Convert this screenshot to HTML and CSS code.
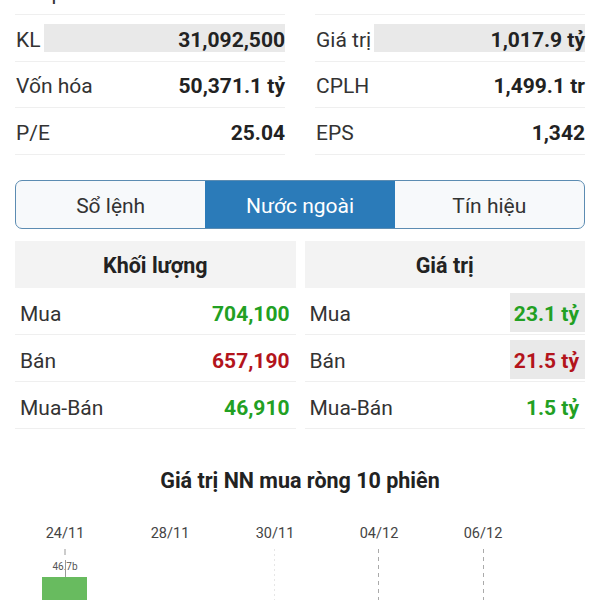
FILE: index.html
```html
<!DOCTYPE html>
<html lang="vi">
<head>
  <meta charset="UTF-8" />
  <meta name="viewport" content="width=device-width, initial-scale=1.0" />
  <title>Nước ngoài</title>
  <link rel="stylesheet" href="styles.css">
</head>
<body>

<div class="screen">

  <section class="stats">
    <div class="stat-row"><span class="label">Thấp nhất</span><span class="value down">32.65</span></div>
    <div class="stat-row"><span class="label">Cao nhất</span><span class="value up">33.75</span></div>

    <div class="stat-row"><span class="label">KL</span><span class="value flash">31,092,500</span></div>
    <div class="stat-row"><span class="label">Giá trị</span><span class="value flash">1,017.9 tỷ</span></div>

    <div class="stat-row"><span class="label">Vốn hóa</span><span class="value">50,371.1 tỷ</span></div>
    <div class="stat-row"><span class="label">CPLH</span><span class="value">1,499.1 tr</span></div>

    <div class="stat-row"><span class="label">P/E</span><span class="value">25.04</span></div>
    <div class="stat-row"><span class="label">EPS</span><span class="value">1,342</span></div>
  </section>

  <nav class="tabs">
    <a href="#">Sổ lệnh</a>
    <a href="#" class="active">Nước ngoài</a>
    <a href="#">Tín hiệu</a>
  </nav>

  <section class="foreign">
    <div class="foreign-col">
      <div class="foreign-head">Khối lượng</div>
      <div class="foreign-row"><span class="name">Mua</span><span class="amount up">704,100</span></div>
      <div class="foreign-row"><span class="name">Bán</span><span class="amount down">657,190</span></div>
      <div class="foreign-row"><span class="name">Mua-Bán</span><span class="amount up">46,910</span></div>
    </div>
    <div class="foreign-col">
      <div class="foreign-head">Giá trị</div>
      <div class="foreign-row"><span class="name">Mua</span><span class="amount up flash">23.1 tỷ</span></div>
      <div class="foreign-row"><span class="name">Bán</span><span class="amount down flash">21.5 tỷ</span></div>
      <div class="foreign-row"><span class="name">Mua-Bán</span><span class="amount up">1.5 tỷ</span></div>
    </div>
  </section>

  <section class="chart">
    <h2>Giá trị NN mua ròng 10 phiên</h2>
    <svg class="chart-svg" width="600" height="120" viewBox="0 0 600 120">
      <g class="dates">
        <text x="65" y="45">24/11</text>
        <text x="170" y="45">28/11</text>
        <text x="275" y="45">30/11</text>
        <text x="379" y="45">04/12</text>
        <text x="483" y="45">06/12</text>
      </g>
      <!-- grid lines -->
      <line x1="65" y1="56" x2="65" y2="62" class="tick" />
      <line x1="274.5" y1="56" x2="274.5" y2="120" class="grid faint" />
      <line x1="378.5" y1="56" x2="378.5" y2="120" class="grid" />
      <line x1="483.5" y1="56" x2="483.5" y2="120" class="grid" />
      <!-- bar -->
      <rect x="42" y="84" width="45" height="40" class="bar-up" />
      <text x="65" y="77" class="bar-label">46.7b</text>
      <line x1="65.5" y1="67" x2="65.5" y2="84" class="connector" />
    </svg>
  </section>

</div>

</body>
</html>
```

FILE: styles.css
```css
body {
  margin: 0;
  font-family: Roboto, "Noto Sans", sans-serif;
  background: #fff;
  color: #2a2a2a;
  overflow: hidden;
}
.screen {
  margin-top: -31.5px;
}
.up {
  color: #22a023;
}
.down {
  color: #b3141c;
}

/* summary rows */
.stats {
  display: grid;
  grid-template-columns: 1fr 1fr;
  column-gap: 30px;
  padding: 0 15px;
}
.stat-row {
  display: flex;
  align-items: center;
  height: 45.5px;
  border-bottom: 1px solid #efefef;
  font-size: 21px;
}
.stat-row .label {
  padding: 4px 0 0 1px;
  color: #333;
}
.stat-row .value {
  margin-left: auto;
  padding-top: 4px;
  font-weight: bold;
  color: #222;
}
.stat-row .value.up {
  color: #22a023;
}
.stat-row .value.down {
  color: #b3141c;
}
.stat-row .flash {
  flex: 1;
  box-sizing: border-box;
  margin-left: 3px;
  height: 28px;
  line-height: 24px;
  text-align: right;
  background: #e9e9e9;
}

/* tabs */
.tabs {
  display: grid;
  grid-template-columns: 1fr 1fr 1fr;
  height: 47px;
  margin: 25px 15px 0;
  border: 1.5px solid #5c8cb2;
  border-radius: 7px;
  overflow: hidden;
  background: #f7f9fb;
}
.tabs a {
  display: flex;
  align-items: center;
  justify-content: center;
  padding-top: 3px;
  font-size: 21px;
  color: #333;
  text-decoration: none;
}
.tabs a.active {
  background: #2b7bb9;
  color: #fff;
}

/* foreign trading table */
.foreign {
  display: grid;
  grid-template-columns: 1fr 1fr;
  column-gap: 9px;
  margin: 12px 15px 0;
}
.foreign-head {
  height: 47px;
  display: flex;
  align-items: center;
  justify-content: center;
  padding-top: 2px;
  box-sizing: border-box;
  background: #f3f3f3;
  font-size: 21.5px;
  font-weight: bold;
  color: #222;
}
.foreign-row {
  display: flex;
  align-items: center;
  justify-content: space-between;
  height: 46.3px;
  padding-left: 5px;
  border-bottom: 1px solid #efefef;
  font-size: 21px;
  color: #333;
}
.foreign-row .name {
  padding-top: 6px;
}
.amount {
  margin-top: 3px;
  padding: 3px 6px 0 4px;
  font-weight: bold;
  line-height: 36px;
}
.amount.flash {
  background: #e9e9e9;
}

/* chart */
.chart {
  margin-top: 40px;
}
.chart h2 {
  margin: 0;
  font-size: 21.5px;
  line-height: 24px;
  text-align: center;
  color: #222;
}
.chart-svg {
  display: block;
}
.dates text {
  font-family: Roboto, sans-serif;
  font-size: 14.5px;
  fill: #444;
  text-anchor: middle;
}
.tick,
.connector {
  stroke: #999;
  stroke-width: 1;
}
.grid {
  stroke: #aaa;
  stroke-width: 1;
  stroke-dasharray: 4 4;
}
.grid.faint {
  stroke: #e6e6e6;
  stroke-dasharray: 2 3;
}
.bar-up {
  fill: #68bb5f;
}
.bar-label {
  font-family: Roboto, sans-serif;
  font-size: 10px;
  fill: #555;
  text-anchor: middle;
}
```
